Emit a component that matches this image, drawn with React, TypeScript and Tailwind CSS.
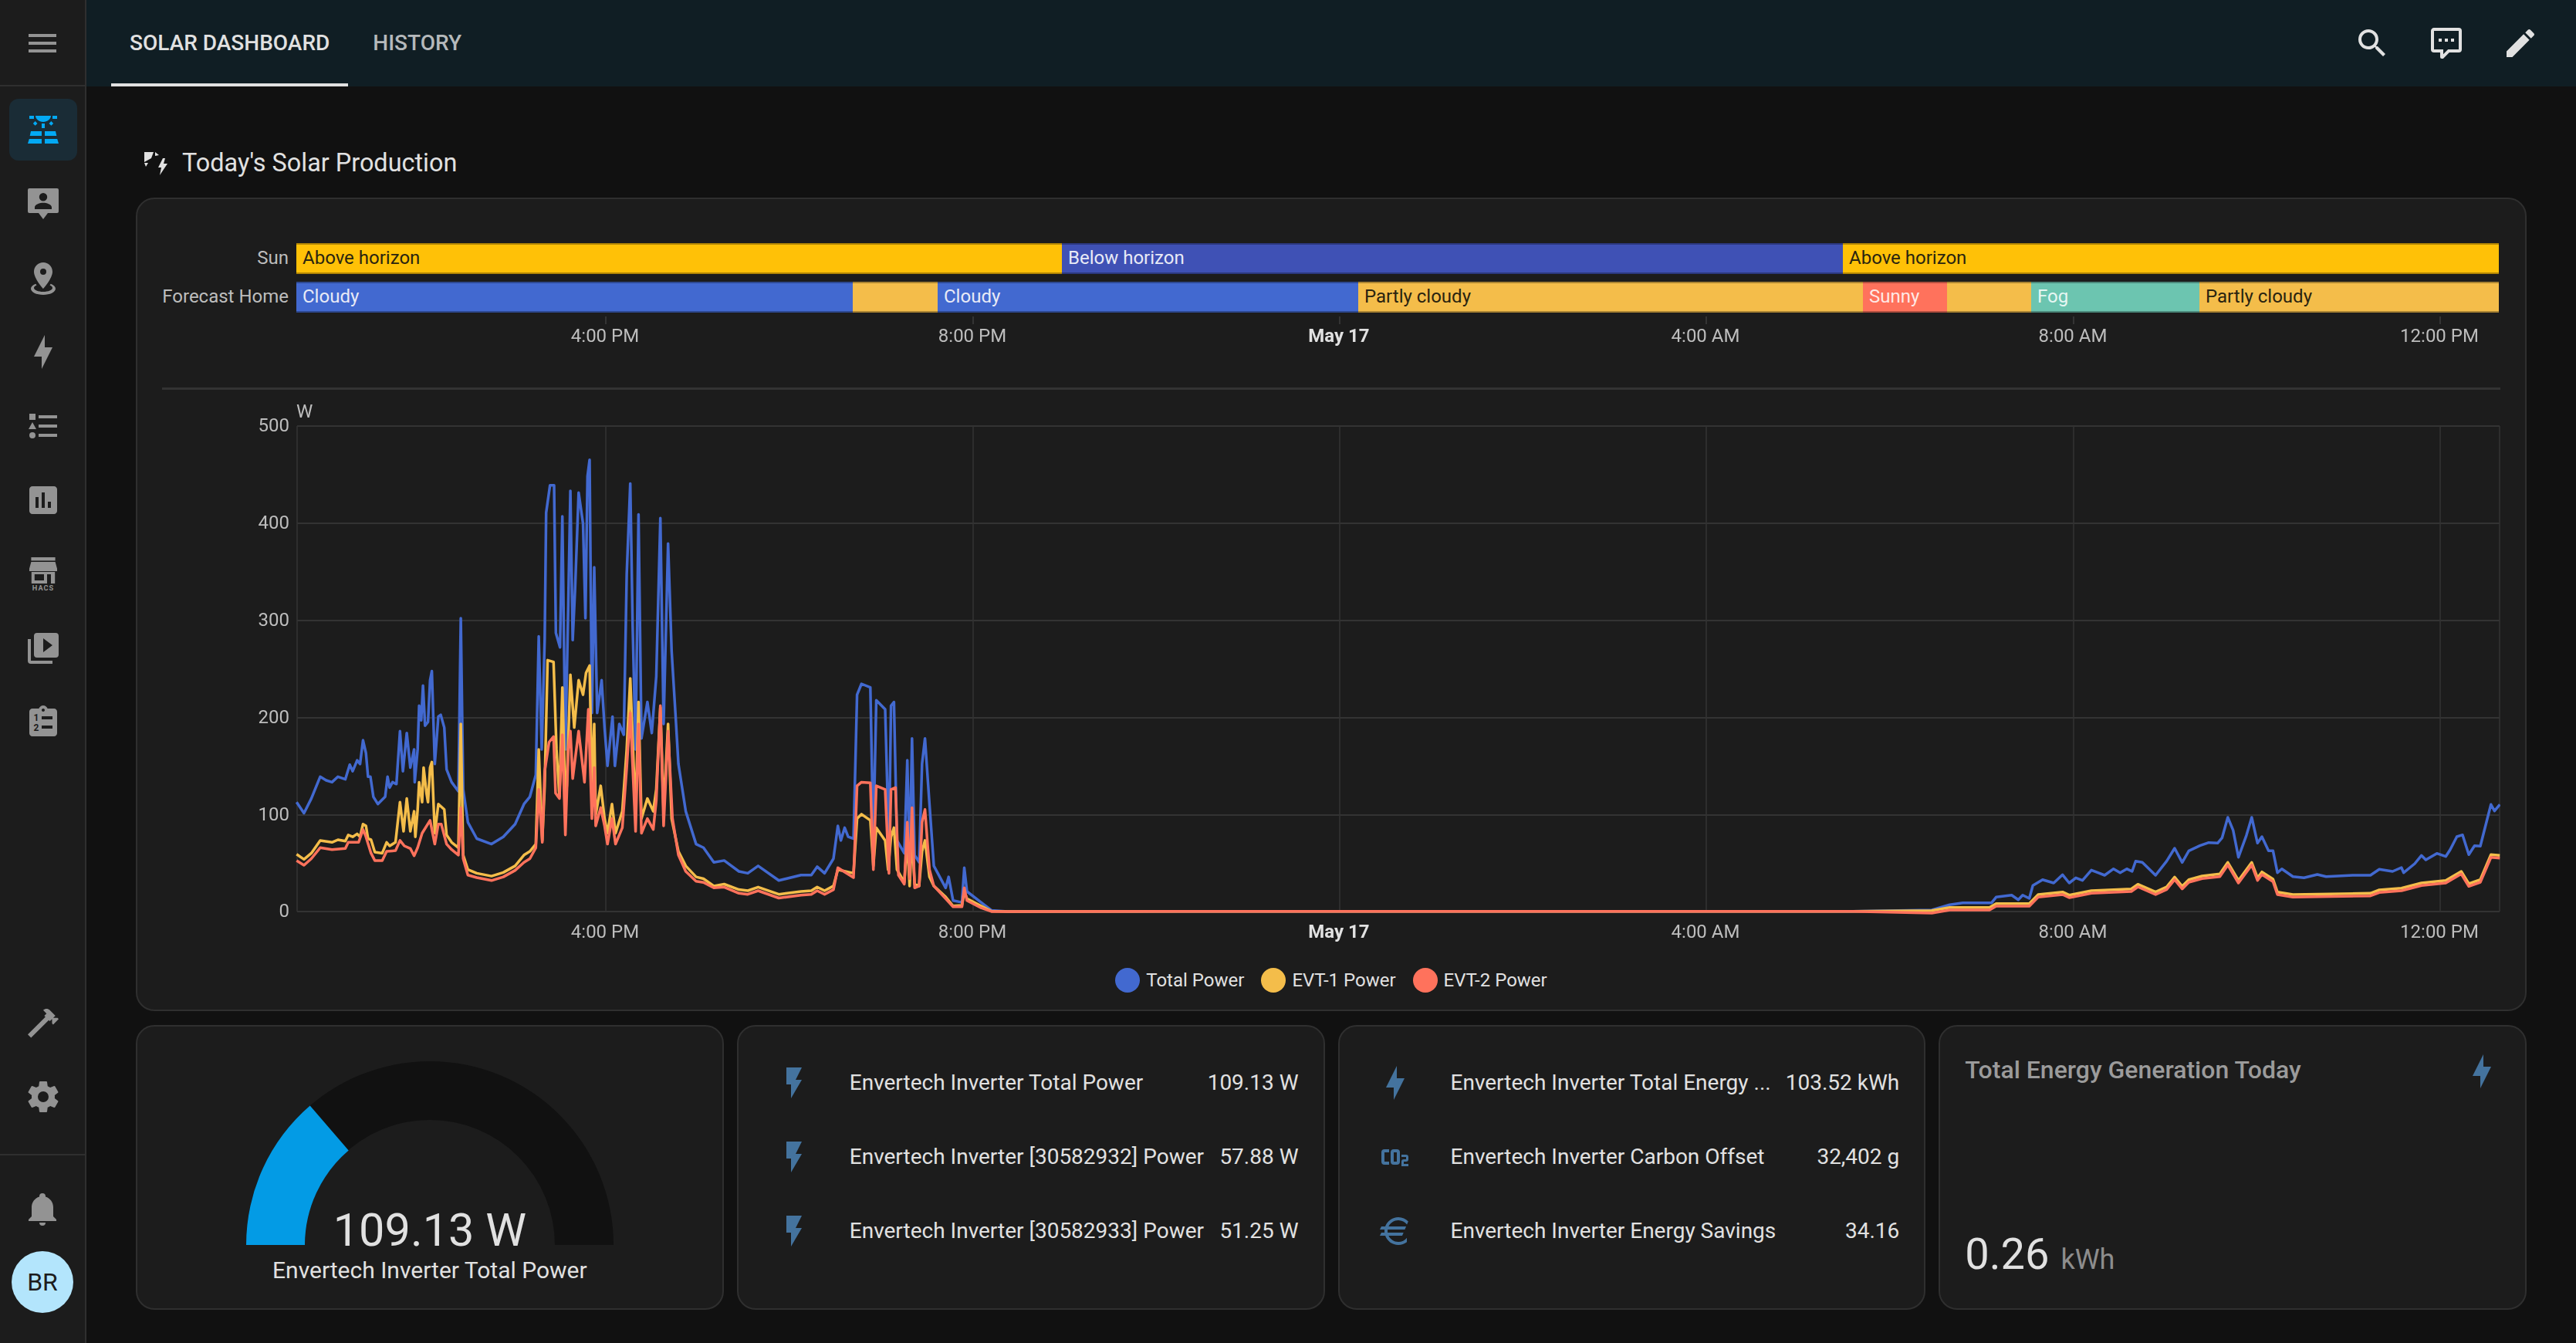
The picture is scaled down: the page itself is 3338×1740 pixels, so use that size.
const MDI = {
  menu: 'M3,6H21V8H3V6M3,11H21V13H3V11M3,16H21V18H3V16Z',
  solar: 'M3.33 16H11V13H4L3.33 16M13 16H20.67L20 13H13V16M21.11 18H13V21H22L21.11 18M2 21H11V18H2.89L2 21M11 8H13V11H11V8M15.76 7.96L17.18 6.55L18.59 7.96L17.18 9.38L15.76 7.96M5.41 7.96L6.83 6.55L8.24 7.96L6.83 9.38L5.41 7.96M3 3H6V5H3V3M18 3H21V5H18V3M12 7C14.76 7 17 5 17 3H7C7 5 9.24 7 12 7Z',
  accountPin: 'M3 2H21A1 1 0 0 1 22 3V17A1 1 0 0 1 21 18H15L12 22L9 18H3A1 1 0 0 1 2 17V3A1 1 0 0 1 3 2M12 5A2.6 2.6 0 0 0 9.4 7.6A2.6 2.6 0 0 0 12 10.2A2.6 2.6 0 0 0 14.6 7.6A2.6 2.6 0 0 0 12 5M6.5 15.5H17.5V14.3C17.5 12.4 14 11.4 12 11.4C10 11.4 6.5 12.4 6.5 14.3V15.5Z',
  marker: 'M12,2C15.31,2 18,4.66 18,7.95C18,12.41 12,19 12,19C12,19 6,12.41 6,7.95C6,4.66 8.69,2 12,2M12,6A2,2 0 0,0 10,8A2,2 0 0,0 12,10A2,2 0 0,0 14,8A2,2 0 0,0 12,6M20,19C20,21.21 16.42,23 12,23C7.58,23 4,21.21 4,19C4,17.71 5.22,16.56 7.11,15.83L7.75,16.74C6.67,17.19 6,17.81 6,18.5C6,19.88 8.69,21 12,21C15.31,21 18,19.88 18,18.5C18,17.81 17.33,17.19 16.25,16.74L16.89,15.83C18.78,16.56 20,17.71 20,19Z',
  bolt: 'M11 15H6L13 1V9H18L11 23V15Z',
  flash: 'M7,2V13H10V22L17,10H13L17,2H7Z',
  listType: 'M5,9.5L7.5,14H2.5L5,9.5M3,4H7V8H3V4M5,20A2,2 0 0,0 7,18A2,2 0 0,0 5,16A2,2 0 0,0 3,18A2,2 0 0,0 5,20M9,5V7H21V5H9M9,19H21V17H9V19M9,13H21V11H9V13Z',
  chartBox: 'M19 3H5C3.9 3 3 3.9 3 5V19C3 20.1 3.9 21 5 21H19C20.1 21 21 20.1 21 19V5C21 3.9 20.1 3 19 3M9 17H7V10H9V17M13 17H11V7H13V17M17 17H15V13H17V17Z',
  playBox: 'M4,6H2V20A2,2 0 0,0 4,22H18V20H4V6M20,2H8A2,2 0 0,0 6,4V16A2,2 0 0,0 8,18H20A2,2 0 0,0 22,16V4A2,2 0 0,0 20,2M12,14.5V5.5L18,10L12,14.5Z',
  clipboard: 'M19 3H14.82C14.4 1.84 13.3 1 12 1S9.6 1.84 9.18 3H5C3.9 3 3 3.9 3 5V19C3 20.1 3.9 21 5 21H19C20.1 21 21 20.1 21 19V5C21 3.9 20.1 3 19 3M12 3C12.55 3 13 3.45 13 4S12.55 5 12 5 11 4.55 11 4 11.45 3 12 3M11 8V10H18V8H11M11 14V16H18V14H11Z',
  hammer: 'M2 19.63L13.43 8.2L12.72 7.5L14.14 6.07L12 3.89C13.2 2.7 15.09 2.7 16.27 3.89L19.87 7.5L18.45 8.91H21.29L22 9.62L18.45 13.21L17.74 12.5V9.62L16.27 11.04L15.57 10.34L4.13 21.76L2 19.63Z',
  cog: 'M12,15.5A3.5,3.5 0 0,1 8.5,12A3.5,3.5 0 0,1 12,8.5A3.5,3.5 0 0,1 15.5,12A3.5,3.5 0 0,1 12,15.5M19.43,12.97C19.47,12.65 19.5,12.33 19.5,12C19.5,11.67 19.47,11.34 19.43,11L21.54,9.37C21.73,9.22 21.78,8.95 21.66,8.73L19.66,5.27C19.54,5.05 19.27,4.96 19.05,5.05L16.56,6.05C16.04,5.66 15.5,5.32 14.87,5.07L14.5,2.42C14.46,2.18 14.25,2 14,2H10C9.75,2 9.54,2.18 9.5,2.42L9.13,5.07C8.5,5.32 7.96,5.66 7.44,6.05L4.95,5.05C4.73,4.96 4.46,5.05 4.34,5.27L2.34,8.73C2.21,8.95 2.27,9.22 2.46,9.37L4.57,11C4.53,11.34 4.5,11.67 4.5,12C4.5,12.33 4.53,12.65 4.57,12.97L2.46,14.63C2.27,14.78 2.21,15.05 2.34,15.27L4.34,18.73C4.46,18.95 4.73,19.03 4.95,18.95L7.44,17.94C7.96,18.34 8.5,18.68 9.13,18.93L9.5,21.58C9.54,21.82 9.75,22 10,22H14C14.25,22 14.46,21.82 14.5,21.58L14.87,18.93C15.5,18.67 16.04,18.34 16.56,17.94L19.05,18.95C19.27,19.03 19.54,18.95 19.66,18.73L21.66,15.27C21.78,15.05 21.73,14.78 21.54,14.63L19.43,12.97Z',
  bell: 'M21,19V20H3V19L5,17V11C5,7.9 7.03,5.17 10,4.29C10,4.19 10,4.1 10,4A2,2 0 0,1 12,2A2,2 0 0,1 14,4C14,4.1 14,4.19 14,4.29C16.97,5.17 19,7.9 19,11V17L21,19M14,21A2,2 0 0,1 12,23A2,2 0 0,1 10,21',
  magnify: 'M9.5,3A6.5,6.5 0 0,1 16,9.5C16,11.11 15.41,12.59 14.44,13.73L14.71,14H15.5L20.5,19L19,20.5L14,15.5V14.71L13.73,14.44C12.59,15.41 11.11,16 9.5,16A6.5,6.5 0 0,1 3,9.5A6.5,6.5 0 0,1 9.5,3M9.5,5C7,5 5,7 5,9.5C5,12 7,14 9.5,14C12,14 14,12 14,9.5C14,7 12,5 9.5,5Z',
  comment: 'M9,22A1,1 0 0,1 8,21V18H4A2,2 0 0,1 2,16V4C2,2.89 2.9,2 4,2H20A2,2 0 0,1 22,4V16A2,2 0 0,1 20,18H13.9L10.2,21.71C10,21.9 9.75,22 9.5,22V22H9M10,16V19.08L13.08,16H20V4H4V16H10M17,11H15V9H17V11M13,11H11V9H13V11M9,11H7V9H9V11Z',
  pencil: 'M20.71,7.04C21.1,6.65 21.1,6 20.71,5.63L18.37,3.29C18,2.9 17.35,2.9 16.96,3.29L15.12,5.12L18.87,8.87M3,17.25V21H6.75L17.81,9.93L14.06,6.18L3,17.25Z',
  co2: 'M5,7A2,2 0 0,0 3,9V15A2,2 0 0,0 5,17H8V15H5V9H8V7H5M11,7A2,2 0 0,0 9,9V15A2,2 0 0,0 11,17H13A2,2 0 0,0 15,15V9A2,2 0 0,0 13,7H11M11,9H13V15H11V9M16,10.5V12H19V13.5H17.5A1.5,1.5 0 0,0 16,15V18H20.5V16.5H17.5V15H19A1.5,1.5 0 0,0 20.5,13.5V12A1.5,1.5 0 0,0 19,10.5H16Z',
  euro: 'M7.07,11L7,12L7.07,13H17.35L16.5,15H7.67C8.8,17.36 11.21,19 14,19C16.23,19 18.22,17.96 19.5,16.33V19.12C18,20.3 16.07,21 14,21C10.08,21 6.75,18.5 5.5,15H2L3,13H5.05L5,12L5.05,11H2L3,9H5.5C6.75,5.5 10.08,3 14,3C16.5,3 18.8,4.04 20.43,5.71L19.57,7.75C18.29,6.08 16.27,5 14,5C11.21,5 8.8,6.64 7.67,9H19.04L18.19,11H7.07Z',
}

function Icon({ d, className = '' }: { d: string; className?: string }) {
  return (
    <svg viewBox="0 0 24 24" className={`h-12 w-12 fill-current ${className}`}>
      <path d={d} fillRule="evenodd" />
    </svg>
  )
}

function HacsIcon() {
  return (
    <svg viewBox="0 0 24 24" className="h-12 w-12 fill-current">
      <rect x="4.2" y="1" width="15.6" height="2.2" />
      <path d="M4.2 4H19.8L21 8.4V10H3V8.4Z" />
      <path fillRule="evenodd" d="M4.4 10.5H19.6V18H17V12H14.5V18H4.4ZM6.4 12V16H12.5V12Z" />
      <text x="12" y="22.6" textAnchor="middle" fontSize="4.6" fontWeight="700" letterSpacing="0.5" className="font-[Roboto,sans-serif]">
        HACS
      </text>
    </svg>
  )
}

function ClipboardIcon() {
  return (
    <svg viewBox="0 0 24 24" className="h-12 w-12">
      <path d={MDI.clipboard} fillRule="evenodd" className="fill-current" />
      <text x="7.5" y="11.2" textAnchor="middle" fontSize="6" fontWeight="700" className="fill-[#1c1c1c] font-[Roboto,sans-serif]">1</text>
      <text x="7.5" y="17.6" textAnchor="middle" fontSize="6" fontWeight="700" className="fill-[#1c1c1c] font-[Roboto,sans-serif]">2</text>
    </svg>
  )
}

function NavItem({ children, active = false }: { children: React.ReactNode; active?: boolean }) {
  return (
    <div
      className={`mx-3 flex h-20 w-[88px] items-center justify-center rounded-xl ${
        active ? 'bg-[#1a2c36] text-[#03a9f4]' : 'text-[#939393]'
      }`}
    >
      {children}
    </div>
  )
}

function Sidebar() {
  return (
    <aside className="flex h-full w-[112px] shrink-0 flex-col border-r-2 border-[#2f2f2f] bg-[#1c1c1c]">
      <div className="flex h-[112px] shrink-0 items-center justify-center border-b-2 border-[#2f2f2f] pt-[2px] text-[#939393]">
        <Icon d={MDI.menu} />
      </div>
      <nav className="flex flex-1 flex-col gap-4 pt-4">
        <NavItem active><Icon d={MDI.solar} /></NavItem>
        <NavItem><Icon d={MDI.accountPin} /></NavItem>
        <NavItem><Icon d={MDI.marker} /></NavItem>
        <NavItem><Icon d={MDI.bolt} /></NavItem>
        <NavItem><Icon d={MDI.listType} /></NavItem>
        <NavItem><Icon d={MDI.chartBox} /></NavItem>
        <NavItem><HacsIcon /></NavItem>
        <NavItem><Icon d={MDI.playBox} /></NavItem>
        <NavItem><ClipboardIcon /></NavItem>
        <div className="flex-1" />
        <NavItem><Icon d={MDI.hammer} /></NavItem>
        <NavItem><Icon d={MDI.cog} /></NavItem>
      </nav>
      <div className="mt-[34px] flex flex-col items-center border-t-2 border-[#2f2f2f] pb-[39px] pt-[29px]">
        <div className="flex h-20 w-full items-center justify-center text-[#939393]">
          <Icon d={MDI.bell} />
        </div>
        <div className="mt-[15px] flex h-20 w-20 items-center justify-center rounded-full bg-[#b3e5fc] text-[32px] text-[#1c1c1c]">
          BR
        </div>
      </div>
    </aside>
  )
}

function Header() {
  return (
    <header className="flex h-[112px] shrink-0 items-center justify-between bg-[#101e24] pl-8 pr-6 text-[#e1e1e1]">
      <div className="flex h-full">
        <div className="flex h-full items-center border-b-4 border-[#e1e1e1] px-6 pt-1 text-[28px] font-medium uppercase">
          Solar Dashboard
        </div>
        <div className="ml-[8px] flex h-full items-center px-6 text-[28px] font-medium uppercase text-[#b5b9bb]">
          History
        </div>
      </div>
      <div className="flex">
        <div className="flex w-24 justify-center"><Icon d={MDI.magnify} /></div>
        <div className="flex w-24 justify-center"><Icon d={MDI.comment} /></div>
        <div className="flex w-24 justify-center"><Icon d={MDI.pencil} /></div>
      </div>
    </header>
  )
}

const BLUE = '#4269d0'
const ORANGE = '#f4bd4a'
const RED = '#ff725c'
const TEAL = '#6cc5b0'
const AMBER = '#ffc107'
const INDIGO = '#3f51b5'
const DARK = '#2a2410'
const LIGHT = '#e8eaf6'

type Segment = { end: number; color: string; text?: string; ink?: string }

const SUN: Segment[] = [
  { end: 1376, color: AMBER, text: 'Above horizon', ink: DARK },
  { end: 2388, color: INDIGO, text: 'Below horizon', ink: LIGHT },
  { end: 3238, color: AMBER, text: 'Above horizon', ink: DARK },
]

const FORECAST: Segment[] = [
  { end: 1105, color: BLUE, text: 'Cloudy', ink: LIGHT },
  { end: 1215, color: ORANGE },
  { end: 1760, color: BLUE, text: 'Cloudy', ink: LIGHT },
  { end: 2414, color: ORANGE, text: 'Partly cloudy', ink: DARK },
  { end: 2523, color: RED, text: 'Sunny', ink: '#ffe9e5' },
  { end: 2632, color: ORANGE },
  { end: 2850, color: TEAL, text: 'Fog', ink: '#e6f7f3' },
  { end: 3238, color: ORANGE, text: 'Partly cloudy', ink: DARK },
]

function TimelineRow({ label, segments }: { label: string; segments: Segment[] }) {
  let start = 384
  return (
    <div className="flex h-10 items-center">
      <div className="w-[164px] shrink-0 pb-[3px] text-right text-[24px] leading-none text-[#bdbdbd]">{label}</div>
      <div className="ml-[10px] flex h-10 flex-1">
        {segments.map((s, i) => {
          const width = s.end - start
          start = s.end
          return (
            <div
              key={i}
              className="flex items-center overflow-hidden border-y-2 border-black/30 pb-[2px] pl-2 text-[24px] leading-none"
              style={{ width, backgroundColor: s.color, color: s.ink }}
            >
              {s.text}
            </div>
          )
        })}
      </div>
    </div>
  )
}

// time ticks, page x positions
const TICKS = [
  { x: 785, label: '4:00 PM' },
  { x: 1261, label: '8:00 PM' },
  { x: 1736, label: 'May 17', bold: true },
  { x: 2211, label: '4:00 AM' },
  { x: 2687, label: '8:00 AM' },
  { x: 3162, label: '12:00 PM' },
]

const CARD_X = 210
const CHART_Y = 506

type Pt = [number, number]
const fromA = (p: Pt): Pt => [170 + p[0] / 2.613, 500 + p[1] / 2.119]
const fromB = (p: Pt): Pt => [770 + p[0] / 2.613, 500 + p[1] / 2.119]
const fromC = (p: Pt): Pt => [2400 + p[0] / 1.742, 900 + p[1] / 3]

const BLUE_A: Pt[] = [[560,1145],[585,1175],[610,1135],[640,1075],[660,1085],[680,1090],[700,1075],[725,1082],[740,1042],[750,1060],[765,1030],[775,1040],[785,975],[795,1010],[802,1075],[810,1075],[820,1130],[835,1150],[860,1130],[868,1075],[875,1105],[885,1090],[898,1095],[910,950],[920,1060],[933,955],[945,1050],[958,1000],[960,1090],[970,1000],[975,880],[982,920],[988,825],[995,935],[1005,925],[1012,810],[1018,785],[1028,1040],[1040,910],[1048,905],[1060,940],[1068,1055],[1085,1090],[1108,1115],[1116,640],[1124,1110],[1140,1200],[1170,1245],[1220,1260],[1260,1240],[1300,1205],[1330,1150],[1350,1130],[1370,1070],[1380,690],[1390,1000],[1400,700],[1405,350],[1418,275],[1432,275],[1438,680],[1452,720],[1460,360],[1470,1000],[1480,600],[1487,290],[1495,700],[1503,560],[1515,295],[1530,380],[1538,640],[1545,250],[1552,205],[1560,900]]
const BLUE_B: Pt[] = [[0,500],[10,900],[25,810],[35,940],[45,1045],[62,910],[70,1045],[85,930],[100,960],[110,520],[122,270],[130,660],[140,1000],[150,355],[160,970],[180,870],[195,955],[210,800],[224,365],[235,930],[250,435],[262,730],[275,900],[285,1040],[310,1170],[345,1260],[370,1270],[405,1310],[440,1305],[490,1335],[520,1340],[555,1320],[625,1360],[700,1345],[735,1345],[755,1322],[780,1340],[810,1300],[825,1210],[835,1250],[848,1215],[860,1240],[878,1245],[890,850],[905,820],[935,830],[945,1250],[955,865],[985,890],[998,1270],[1005,880],[1015,870],[1025,1250],[1050,1285],[1060,1030],[1068,1310],[1076,970],[1085,1290],[1100,1310],[1110,1040],[1120,970],[1135,1150],[1150,1320],[1190,1380],[1200,1350],[1215,1415],[1245,1420],[1253,1325],[1262,1390],[1310,1420],[1345,1442],[1400,1445]]
const BLUE_C: Pt[] = [[0,845],[180,840],[220,820],[250,812],[315,812],[325,790],[360,782],[375,800],[385,782],[400,795],[408,745],[430,722],[455,735],[475,703],[490,735],[505,715],[520,725],[540,685],[555,695],[570,705],[590,680],[605,695],[620,680],[632,690],[640,650],[655,655],[685,705],[710,650],[728,600],[745,655],[760,610],[785,590],[805,578],[825,580],[835,560],[848,480],[860,530],[872,635],[890,550],[902,480],[915,580],[925,555],[940,610],[950,610],[960,695],[970,680],[995,710],[1020,715],[1050,702],[1070,710],[1130,705],[1170,705],[1190,682],[1220,690],[1240,675],[1245,695],[1270,660],[1285,628],[1295,645],[1320,620],[1340,632],[1350,605],[1365,555],[1378,548],[1392,625],[1405,590],[1418,592],[1442,430],[1450,455],[1462,430]]

const ORANGE_A: Pt[] = [[560,1288],[585,1302],[610,1285],[640,1250],[680,1255],[700,1248],[725,1252],[735,1235],[750,1240],[765,1232],[775,1240],[785,1205],[795,1210],[802,1245],[812,1248],[825,1282],[850,1285],[865,1255],[875,1265],[895,1255],[910,1145],[922,1225],[933,1135],[945,1225],[958,1170],[962,1240],[970,1165],[975,1090],[985,1145],[990,1050],[1000,1120],[1005,1145],[1012,1050],[1018,1035],[1028,1230],[1040,1150],[1060,1165],[1068,1235],[1085,1255],[1108,1270],[1116,930],[1124,1290],[1140,1330],[1170,1340],[1220,1348],[1260,1338],[1300,1320],[1330,1290],[1350,1280],[1370,1260],[1380,1000],[1392,1250],[1400,1100],[1410,755],[1430,760],[1440,1000],[1450,1130],[1460,830],[1470,1140],[1475,1100],[1487,795],[1500,940],[1515,810],[1530,850],[1540,790],[1552,770],[1560,1100]]
const ORANGE_B: Pt[] = [[0,930],[5,1180],[22,1100],[35,1190],[45,1230],[60,1150],[72,1230],[95,1170],[110,1000],[122,805],[140,1180],[150,870],[160,1190],[180,1135],[200,1170],[210,1110],[224,885],[235,1170],[250,930],[262,1190],[285,1280],[310,1320],[345,1350],[370,1355],[405,1375],[440,1370],[490,1385],[520,1388],[555,1378],[625,1398],[700,1390],[735,1388],[755,1378],[780,1388],[810,1375],[825,1330],[878,1340],[890,1190],[905,1178],[935,1195],[945,1320],[955,1215],[985,1250],[995,1330],[1005,1240],[1015,1215],[1025,1330],[1050,1365],[1060,1250],[1068,1375],[1076,1240],[1085,1370],[1100,1375],[1110,1280],[1120,1250],[1135,1350],[1150,1375],[1190,1405],[1215,1430],[1245,1428],[1253,1390],[1262,1410],[1310,1430],[1345,1444],[1400,1445]]
const ORANGE_C: Pt[] = [[0,845],[180,842],[220,830],[310,830],[325,815],[400,815],[420,780],[475,770],[490,782],[540,765],[630,758],[645,740],[685,770],[710,750],[728,712],[745,748],[760,722],[790,708],[830,700],[848,655],[872,725],[902,655],[915,715],[925,692],[950,720],[960,770],[995,780],[1170,775],[1190,762],[1240,755],[1285,735],[1340,725],[1375,690],[1392,738],[1418,722],[1442,625],[1462,628]]

const RED_A: Pt[] = [[560,1305],[585,1318],[610,1300],[640,1270],[680,1275],[725,1272],[735,1255],[770,1255],[785,1220],[795,1240],[812,1285],[825,1305],[850,1305],[865,1280],[895,1278],[910,1250],[925,1265],[945,1272],[958,1292],[970,1270],[985,1230],[1012,1195],[1028,1260],[1040,1205],[1050,1205],[1068,1260],[1085,1275],[1108,1290],[1116,1160],[1124,1300],[1140,1345],[1170,1352],[1220,1360],[1260,1350],[1300,1332],[1330,1310],[1350,1300],[1370,1270],[1380,1110],[1392,1255],[1400,1060],[1415,980],[1430,965],[1437,1120],[1450,1135],[1460,960],[1470,1235],[1480,1000],[1487,950],[1495,1080],[1515,950],[1535,1090],[1548,890],[1560,1190]]
const RED_B: Pt[] = [[0,1050],[5,1210],[22,1160],[35,1210],[45,1260],[60,1190],[72,1260],[95,1215],[110,1050],[122,900],[140,1225],[150,930],[160,1230],[180,1190],[200,1220],[210,1140],[224,880],[235,1210],[250,950],[265,1190],[285,1290],[310,1335],[345,1362],[370,1365],[405,1380],[440,1378],[490,1395],[520,1398],[555,1388],[625,1408],[700,1400],[735,1398],[755,1388],[780,1398],[810,1385],[825,1325],[878,1352],[890,1100],[905,1090],[935,1092],[945,1330],[955,1100],[985,1110],[998,1340],[1005,1110],[1020,1105],[1030,1345],[1050,1370],[1060,1200],[1068,1355],[1076,1160],[1085,1380],[1100,1375],[1110,1200],[1120,1165],[1135,1330],[1150,1375],[1190,1410],[1215,1432],[1245,1432],[1253,1380],[1262,1415],[1310,1435],[1345,1445],[1400,1445]]
const RED_C: Pt[] = ORANGE_C.map(([x, y]): Pt => [x, x < 100 ? y : y + 10])

const toLine = (a: Pt[], b: Pt[], c: Pt[]) =>
  [...a.map(fromA), ...b.map(fromB), ...c.map(fromC)]
    .map(([x, y]) => `${(x - CARD_X).toFixed(1)},${(y - CHART_Y).toFixed(1)}`)
    .join(' ')

const Y_TICKS = [
  { y: 553, label: '500' },
  { y: 679, label: '400' },
  { y: 805, label: '300' },
  { y: 931, label: '200' },
  { y: 1057, label: '100' },
  { y: 1182, label: '0' },
]

function AxisTicks() {
  return (
    <svg width={3030} height={60} className="block blur-[0.5px]">
      {TICKS.map(t => (
        <g key={t.x}>
          <line x1={t.x - CARD_X} x2={t.x - CARD_X} y1={5} y2={15} stroke="#3d3d3d" strokeWidth={1.5} />
          <text
            x={t.x - CARD_X - 1}
            y={38}
            textAnchor="middle"
            fontSize={24}
            fontWeight={t.bold ? 700 : 400}
            fill={t.bold ? '#e1e1e1' : '#bdbdbd'}
          >
            {t.label}
          </text>
        </g>
      ))}
    </svg>
  )
}

function PowerChart() {
  const h = 730
  const top = 553 - CHART_Y
  const bottom = 1182 - CHART_Y
  const left = 385 - CARD_X
  const right = 3239 - CARD_X
  return (
    <svg width={3030} height={h} className="block blur-[0.5px]">
      <text x={left - 1} y={36} fontSize={24} fill="#bdbdbd">W</text>
      {Y_TICKS.map(t => (
        <g key={t.y}>
          <line x1={left} x2={right} y1={t.y - CHART_Y} y2={t.y - CHART_Y} stroke="#333333" strokeWidth={2} />
          <text x={left - 10} y={t.y - CHART_Y + 7} textAnchor="end" fontSize={24} fill="#bdbdbd">{t.label}</text>
        </g>
      ))}
      <line x1={left} x2={left} y1={top} y2={bottom} stroke="#333333" strokeWidth={1.5} />
      <line x1={right} x2={right} y1={top} y2={bottom} stroke="#333333" strokeWidth={1.5} />
      {TICKS.map(t => (
        <g key={t.x}>
          <line x1={t.x - CARD_X} x2={t.x - CARD_X} y1={top} y2={bottom} stroke="#333333" strokeWidth={1.5} />
          <text
            x={t.x - CARD_X - 1}
            y={bottom + 34}
            textAnchor="middle"
            fontSize={24}
            fontWeight={t.bold ? 700 : 400}
            fill={t.bold ? '#e1e1e1' : '#bdbdbd'}
          >
            {t.label}
          </text>
        </g>
      ))}
      <polyline points={toLine(BLUE_A, BLUE_B, BLUE_C)} fill="none" stroke={BLUE} strokeWidth={3.5} strokeLinejoin="round" />
      <polyline points={toLine(ORANGE_A, ORANGE_B, ORANGE_C)} fill="none" stroke={ORANGE} strokeWidth={3.5} strokeLinejoin="round" />
      <polyline points={toLine(RED_A, RED_B, RED_C)} fill="none" stroke={RED} strokeWidth={3.5} strokeLinejoin="round" />
    </svg>
  )
}

function LegendItem({ color, label }: { color: string; label: string }) {
  return (
    <div className="flex items-center gap-2">
      <span className="h-8 w-8 rounded-full" style={{ backgroundColor: color }} />
      <span className="text-[24px] leading-none text-[#e1e1e1]">{label}</span>
    </div>
  )
}

function SolarCard() {
  return (
    <section className="flex h-[1054px] flex-col rounded-3xl border-2 border-[#2f2f2f] bg-[#1c1c1c] px-8 pt-[57px]">
      <div className="flex flex-col gap-[10px]">
        <TimelineRow label="Sun" segments={SUN} />
        <TimelineRow label="Forecast Home" segments={FORECAST} />
      </div>
      <AxisTicks />
      <div className="mt-[37px] h-[3px] w-[3030px] bg-[#333333]" />
      <PowerChart />
      <div className="mt-[19px] flex justify-center gap-[22px]">
        <LegendItem color={BLUE} label="Total Power" />
        <LegendItem color={ORANGE} label="EVT-1 Power" />
        <LegendItem color={RED} label="EVT-2 Power" />
      </div>
    </section>
  )
}

function Card({ children, className = '' }: { children: React.ReactNode; className?: string }) {
  return <div className={`h-[369px] rounded-3xl border-2 border-[#2f2f2f] bg-[#1c1c1c] ${className}`}>{children}</div>
}

function GaugeCard() {
  return (
    <Card className="flex flex-col items-center pt-[45px]">
      <div className="relative h-[238px] w-[476px]">
        <svg viewBox="0 0 476 238" className="h-full w-full">
          <path d="M0 238A238 238 0 0 1 476 238H400A162 162 0 0 0 76 238Z" fill="#111111" />
          <path d="M0 238A238 238 0 0 1 82.7 57.5L132.7 115.5A162 162 0 0 0 76 238Z" fill="#039be5" />
        </svg>
        <div className="absolute inset-x-0 bottom-[-11px] text-center text-[59.5px] leading-none text-[#e1e1e1]">109.13 W</div>
      </div>
      <div className="mt-[18px] text-[30px] leading-none text-[#e1e1e1]">Envertech Inverter Total Power</div>
    </Card>
  )
}

function EntityRow({ icon, name, value }: { icon: string; name: string; value: string }) {
  return (
    <div className="flex h-24 items-center">
      <div className="flex w-20 shrink-0 justify-center text-[#44739e]">
        <Icon d={icon} />
      </div>
      <div className="ml-8 min-w-0 flex-1 whitespace-nowrap text-[28px] text-[#e1e1e1]">{name}</div>
      <div className="ml-4 shrink-0 text-[28px] text-[#e1e1e1]">{value}</div>
    </div>
  )
}

function EnergyCard() {
  return (
    <Card className="flex flex-col justify-between pb-[22px] pl-[32px] pr-[32px] pt-[34px]">
      <div className="flex items-center justify-between">
        <div className="mb-[4px] text-[32px] font-medium leading-none text-[#9b9b9b]">Total Energy Generation Today</div>
        <div className="text-[#44739e]"><Icon d={MDI.bolt} /></div>
      </div>
      <div className="flex items-baseline gap-[15px] pb-[20px]">
        <span className="text-[56px] leading-none text-[#e1e1e1]">0.26</span>
        <span className="text-[36px] leading-none text-[#8d8d8d]">kWh</span>
      </div>
    </Card>
  )
}

export default function App() {
  return (
    <div className="flex h-[1740px] w-[3338px] overflow-hidden bg-[#111111] font-[Roboto,sans-serif]">
      <Sidebar />
      <div className="flex min-w-0 flex-1 flex-col">
        <Header />
        <main className="flex flex-col px-16 pt-[72px]">
          <div className="flex h-14 items-center pl-[11px] text-[32.4px] text-[#e1e1e1]">
            <svg viewBox="0 0 30 30" className="h-[30px] w-[30px] fill-current">
              <path d="M0 0H12L9 8L0 13ZM14 0L19 4L14 5ZM0 14H5L2 19ZM24 8L18 20H22L20 30L30 15H25L27 8Z" />
            </svg>
            <span className="ml-[19px] pb-[2px]">Today's Solar Production</span>
          </div>
          <div className="mt-4 flex flex-col gap-[18px]">
            <SolarCard />
            <div className="grid grid-cols-4 gap-[17px]">
              <GaugeCard />
              <Card className="px-8 pt-[25px]">
                <EntityRow icon={MDI.flash} name="Envertech Inverter Total Power" value="109.13 W" />
                <EntityRow icon={MDI.flash} name="Envertech Inverter [30582932] Power" value="57.88 W" />
                <EntityRow icon={MDI.flash} name="Envertech Inverter [30582933] Power" value="51.25 W" />
              </Card>
              <Card className="px-8 pt-[25px]">
                <EntityRow icon={MDI.bolt} name="Envertech Inverter Total Energy ..." value="103.52 kWh" />
                <EntityRow icon={MDI.co2} name="Envertech Inverter Carbon Offset" value="32,402 g" />
                <EntityRow icon={MDI.euro} name="Envertech Inverter Energy Savings" value="34.16" />
              </Card>
              <EnergyCard />
            </div>
          </div>
        </main>
      </div>
    </div>
  )
}
